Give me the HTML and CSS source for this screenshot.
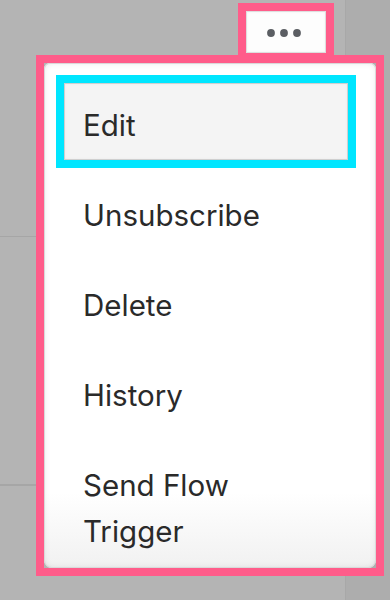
FILE: index.html
```html
<!DOCTYPE html>
<html lang="en">
<head>
<meta charset="utf-8">
<title>Menu</title>
<link rel="stylesheet" href="styles.css">
</head>
<body>
<div class="page">
  <div class="main">
    <div class="row row-first">
      <button class="more" type="button" aria-label="More">
        <svg width="34" height="8" viewBox="0 0 34 8"><circle cx="4" cy="4" r="3.9"/><circle cx="17" cy="4" r="3.9"/><circle cx="30" cy="4" r="3.9"/></svg>
      </button>
    </div>
    <div class="row row-second"></div>
    <div class="row"></div>
  </div>
  <div class="side"></div>

  <div class="menu-frame">
    <ul class="menu">
      <li class="item item-active">Edit</li>
      <li class="item">Unsubscribe</li>
      <li class="item">Delete</li>
      <li class="item">History</li>
      <li class="item">Send Flow Trigger</li>
    </ul>
  </div>
</div>
</body>
</html>
```
FILE: styles.css
```css
* { box-sizing: border-box; }
html, body { margin: 0; padding: 0; }
body {
  width: 390px;
  height: 600px;
  overflow: hidden;
  background: #b3b3b3;
  font-family: Inter, "Noto Sans", sans-serif;
}
.page {
  position: relative;
  width: 390px;
  height: 600px;
  display: grid;
  grid-template-columns: 345px 45px;
}
.main {
  display: flex;
  flex-direction: column;
  background: #b4b4b4;
}
.side {
  background: #adadad;
  border-left: 1px solid #a8a8a8;
}
.row {
  border-bottom: 1px solid #a6a6a6;
}
.row-first {
  height: 237px;
  display: flex;
  justify-content: flex-end;
  align-items: flex-start;
  padding: 11px 19px 0 0;
}
.row-second { height: 248px; }
.more {
  width: 80px;
  height: 42px;
  padding: 0;
  margin: 0;
  border: 0;
  background: #fdfdfd;
  box-shadow: inset 0 0 0 1px #dedede, inset 0 0 3px rgba(0,0,0,0.12);
  outline: 8px solid #ff5c8a;
  display: flex;
  align-items: center;
  justify-content: center;
}
.more svg { fill: #5b5e63; margin-left: -4px; margin-top: 1px; }

.menu-frame {
  position: absolute;
  left: 36px;
  top: 55px;
  width: 348px;
  height: 521px;
  border: 8px solid #ff5c8a;
}
.menu {
  list-style: none;
  margin: 0;
  height: 100%;
  padding: 20px 28px 1px 20px;
  background: linear-gradient(#ffffff 85%, #f1f1f1 100%);
  border-radius: 6px 6px 8px 8px;
  box-shadow: inset 0 0 0 1px #d9d9d9, inset 0 0 6px rgba(0,0,0,0.10);
  display: flex;
  flex-direction: column;
  gap: 13px;
  color: #2a2a2a;
  font-size: 29.5px;
  line-height: 46px;
}
.item {
  padding: 19px 18px 12px 19px;
}
.item-active {
  background: #f4f4f4;
  box-shadow: inset 0 0 0 1px #cfcfcf, inset 0 0 3px rgba(0,0,0,0.1);
  outline: 8px solid #00e6ff;
}
```
